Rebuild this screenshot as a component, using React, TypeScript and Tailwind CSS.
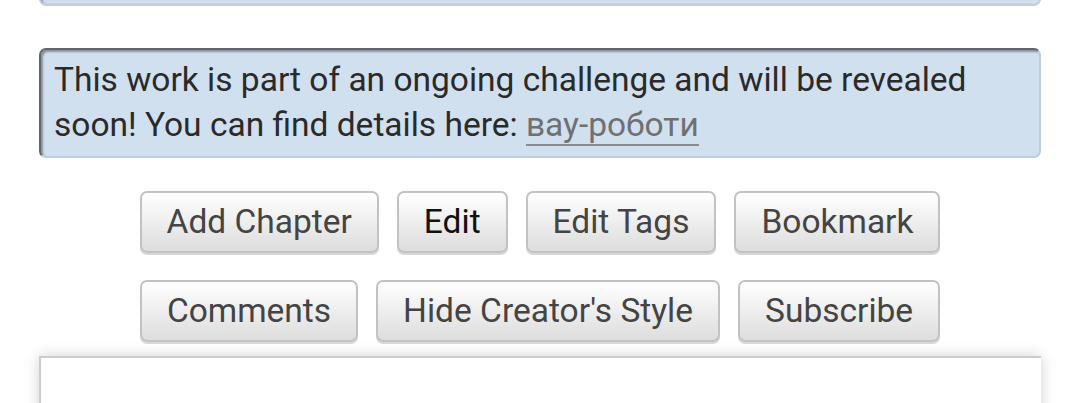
import React from 'react';

const rows: string[][] = [
  ['Add Chapter', 'Edit', 'Edit Tags', 'Bookmark'],
  ['Comments', "Hide Creator's Style", 'Subscribe'],
];

function Btn({ label, dark }: { label: string; dark?: boolean }) {
  return (
    <button
      className={
        'h-[62px] rounded-[7px] border-2 border-[#c2c2c2] bg-gradient-to-b from-[#ffffff] to-[#dddddd] px-[25px] text-[33.5px] leading-none shadow-[0_2px_0_#d8d8d8] ' +
        (dark ? 'text-[#111111]' : 'text-[#444444]')
      }
    >
      {label}
    </button>
  );
}

export default function App() {
  return (
    <div className="h-[403px] overflow-hidden bg-white px-[39px] font-['Roboto','Liberation_Sans',sans-serif]">
      <div className="-mt-[40px] h-[46px] rounded-[7px] border-2 border-[#bfcfdf] bg-[#d1e0ef] shadow-[inset_1px_1px_2px_#556]" />

      <div className="mt-[42px] rounded-[7px] border-2 border-b-[#bccddd] border-l-[#5f6670] border-r-[#bccddd] border-t-[#5f6670] bg-[#d1e0ef] px-[13px] pb-[9px] pt-[7px] text-[33.5px] leading-[45px] text-[#2a2a2a] shadow-[inset_2px_2px_2px_rgba(0,0,0,0.35)]">
        This work is part of an ongoing challenge and will be revealed soon! You can find details here:{' '}
        <a className="border-b-2 border-[#8a8a8a] text-[#707070]">вау-роботи</a>
      </div>

      <div className="mt-[33px] flex flex-col items-center gap-[27px]">
        {rows.map((row, i) => (
          <div key={i} className="flex gap-[18px]">
            {row.map((b) => (
              <Btn key={b} label={b} dark={b === 'Edit'} />
            ))}
          </div>
        ))}
      </div>

      <div className="mt-[14px] h-[80px] border-l-2 border-t-2 border-[#cccccc] bg-white shadow-[0_0_14px_rgba(0,0,0,0.18)]" />
    </div>
  );
}
